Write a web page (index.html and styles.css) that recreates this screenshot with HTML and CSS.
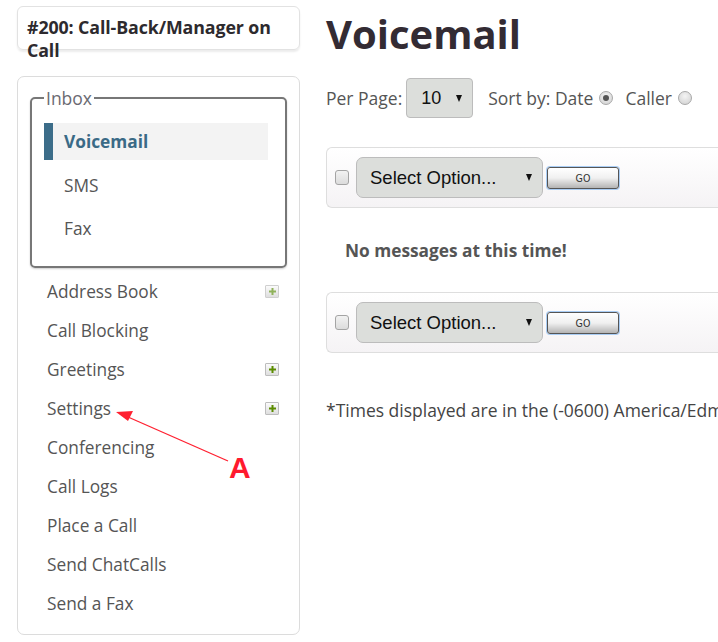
FILE: index.html
```html
<!DOCTYPE html>
<html>
<head>
<meta charset="utf-8">
<title>Voicemail</title>
<link rel="stylesheet" href="styles.css">
</head>
<body>
<div class="page">
  <aside class="left">
    <div class="ext-box"><div class="ext-title">#200: Call-Back/Manager on Call</div></div>
    <nav class="side">
      <fieldset class="inbox">
        <legend>Inbox</legend>
        <ul class="inbox-list">
          <li class="active">Voicemail</li>
          <li>SMS</li>
          <li>Fax</li>
        </ul>
      </fieldset>
      <ul class="menu">
        <li>Address Book <span class="plus dim"><svg width="7" height="7" viewBox="0 0 7 7"><path d="M3.5 0v7M0 3.5h7" stroke="currentColor" stroke-width="2"/></svg></span></li>
        <li>Call Blocking</li>
        <li>Greetings <span class="plus"><svg width="7" height="7" viewBox="0 0 7 7"><path d="M3.5 0v7M0 3.5h7" stroke="currentColor" stroke-width="2"/></svg></span></li>
        <li>Settings <span class="plus"><svg width="7" height="7" viewBox="0 0 7 7"><path d="M3.5 0v7M0 3.5h7" stroke="currentColor" stroke-width="2"/></svg></span></li>
        <li>Conferencing</li>
        <li>Call Logs</li>
        <li>Place a Call</li>
        <li>Send ChatCalls</li>
        <li>Send a Fax</li>
      </ul>
    </nav>
  </aside>
  <main class="main">
    <h1 class="title">Voicemail</h1>
    <div class="controls">
      <span class="lbl">Per Page:</span>
      <div class="sel sel-small"><span>10</span><i class="tri"></i></div>
      <span class="lbl sort">Sort by: Date</span><span class="radio on"></span>
      <span class="lbl caller">Caller</span><span class="radio"></span>
    </div>
    <div class="bar">
      <span class="chk"></span>
      <div class="sel sel-big"><span>Select Option...</span><i class="tri"></i></div>
      <button class="go">GO</button>
    </div>
    <p class="empty">No messages at this time!</p>
    <div class="bar">
      <span class="chk"></span>
      <div class="sel sel-big"><span>Select Option...</span><i class="tri"></i></div>
      <button class="go">GO</button>
    </div>
    <p class="tz">*Times displayed are in the (-0600) America/Edmonton timezone.</p>
  </main>
</div>
<svg class="annot" width="718" height="642" viewBox="0 0 718 642">
  <line x1="228" y1="461" x2="128" y2="417" stroke="#ff2030" stroke-width="1.3"/>
  <path d="M116 412 L133 411 L128 421 Z" fill="#ff2030"/>
</svg>
<div class="annot-label">A</div>
</body>
</html>
```

FILE: styles.css
```css
html, body {
  margin: 0;
  padding: 0;
  overflow: hidden;
  background: #fff;
}
body {
  font-family: "Open Sans", "Liberation Sans", sans-serif;
  color: #555;
  width: 718px;
  height: 642px;
  position: relative;
}
.page {
  display: flex;
  align-items: flex-start;
  padding: 6px 0 0 17px;
  gap: 26px;
}
.left {
  width: 283px;
  flex: none;
}
.ext-box {
  height: 44px;
  box-sizing: border-box;
  border: 1px solid #e2e2e2;
  border-radius: 6px;
  box-shadow: 0 2px 2px rgba(0,0,0,0.08);
  padding: 9px 8px 0 9px;
}
.ext-title {
  font-weight: 700;
  font-size: 17.8px;
  line-height: 23px;
  color: #2d2a2e;
  letter-spacing: -0.1px;
}
.side {
  margin-top: 26px;
  border: 1px solid #dcdcdc;
  border-radius: 7px;
  padding: 10px 12px 12px 12px;
  height: 559px;
  box-sizing: border-box;
}
.inbox {
  margin: 0;
  border: 2px solid #777;
  border-radius: 5px;
  padding: 14px 17px 19px 12px;
  box-shadow: 0 1px 2px rgba(0,0,0,0.2);
}
.inbox legend {
  padding: 0 2px;
  font-size: 17.5px;
  line-height: 22px;
  color: #6a6a72;
}
.inbox-list {
  list-style: none;
  margin: 0;
  padding: 0;
  display: flex;
  flex-direction: column;
  gap: 6.5px;
}
.inbox-list li {
  height: 37px;
  display: flex;
  align-items: center;
  padding-left: 20px;
  font-size: 17.3px;
  color: #555;
}
.inbox-list li.active {
  background: #f3f3f3;
  border-left: 9px solid #3c6d89;
  padding-left: 11px;
  font-weight: 700;
  color: #3a6a86;
}
.menu {
  list-style: none;
  margin: 4px 0 0 0;
  padding: 0 8px 0 17px;
}
.menu li {
  height: 39px;
  display: flex;
  align-items: center;
  justify-content: space-between;
  font-size: 17.3px;
  color: #555;
}
.plus {
  width: 12px;
  height: 11px;
  border: 1px solid #bdbdbd;
  border-radius: 1px;
  background: linear-gradient(#fbfbfb, #dedede);
  display: flex;
  align-items: center;
  justify-content: center;
  color: #5b8c00;
}
.plus.dim {
  color: #8fb25a;
  border-color: #cfcfcf;
}
.main {
  flex: none;
  width: 460px;
}
.title {
  margin: 0;
  font-size: 40px;
  line-height: 48px;
  font-weight: 700;
  color: #332b33;
  padding-top: 4px;
}
.controls {
  margin-top: 20px;
  display: flex;
  align-items: center;
  height: 40px;
  font-size: 17.5px;
}
.lbl {
  color: #555;
  white-space: nowrap;
}
.sel {
  box-sizing: border-box;
  background: #dcdedb;
  border: 1px solid #bcbcbc;
  display: flex;
  align-items: center;
  justify-content: space-between;
  font-family: "Liberation Sans", Arial, sans-serif;
  color: #111;
}
.sel-small {
  width: 67px;
  height: 40px;
  margin-left: 4px;
  border-radius: 4px;
  padding: 0 10px 0 14px;
  font-size: 18px;
}
.sort { margin-left: 15px; }
.caller { margin-left: 12px; }
.radio {
  width: 14px;
  height: 14px;
  box-sizing: border-box;
  border-radius: 50%;
  border: 1px solid #a8a8a8;
  background: radial-gradient(circle at 50% 35%, #f4f4f4, #cfcfcf);
  margin-left: 6px;
  display: flex;
  align-items: center;
  justify-content: center;
}
.radio.on::after {
  content: "";
  width: 6px;
  height: 6px;
  border-radius: 50%;
  background: #555;
}
.tri {
  width: 0;
  height: 0;
  border-left: 3px solid transparent;
  border-right: 3px solid transparent;
  border-top: 7px solid #111;
}
.bar {
  margin-top: 29px;
  box-sizing: border-box;
  height: 61px;
  width: 420px;
  border: 1px solid #dedede;
  border-right: none;
  border-radius: 6px 0 0 6px;
  background: linear-gradient(#ffffff, #f5f3f5);
  display: flex;
  align-items: center;
  padding-left: 8px;
}
.chk {
  width: 14px;
  height: 15px;
  box-sizing: border-box;
  border: 1px solid #a4a4a4;
  border-radius: 3px;
  background: linear-gradient(#f2f2f2, #dcdcdc);
}
.sel-big {
  width: 187px;
  height: 41px;
  margin-left: 7px;
  border-radius: 7px;
  padding: 0 10px 0 13px;
  font-size: 18.5px;
}
.go {
  margin: 0 0 0 4px;
  width: 72px;
  height: 22px;
  box-sizing: border-box;
  border: 1px solid #555;
  border-radius: 3px;
  box-shadow: 0 0 0 1px #a9cdf5;
  background: linear-gradient(#ffffff 0%, #f0f0f0 50%, #b4b4b4 100%);
  font-family: "DejaVu Sans Condensed", "Liberation Sans", sans-serif;
  font-size: 10.5px;
  color: #333;
  padding: 0;
}
.empty {
  margin: 0;
  height: 84px;
  display: flex;
  align-items: center;
  padding-left: 19px;
  font-weight: 700;
  font-size: 17.3px;
  color: #555;
}
.bar + .empty + .bar { margin-top: 0; }
.tz {
  margin: 45px 0 0 0;
  font-size: 17.5px;
  color: #444;
  white-space: nowrap;
}
.annot {
  position: absolute;
  left: 0;
  top: 0;
  pointer-events: none;
}
.annot-label {
  position: absolute;
  left: 229px;
  top: 451px;
  font-family: "Liberation Sans", Arial, sans-serif;
  font-weight: 700;
  font-size: 30px;
  line-height: 34px;
  color: #ff1a2e;
}
```
